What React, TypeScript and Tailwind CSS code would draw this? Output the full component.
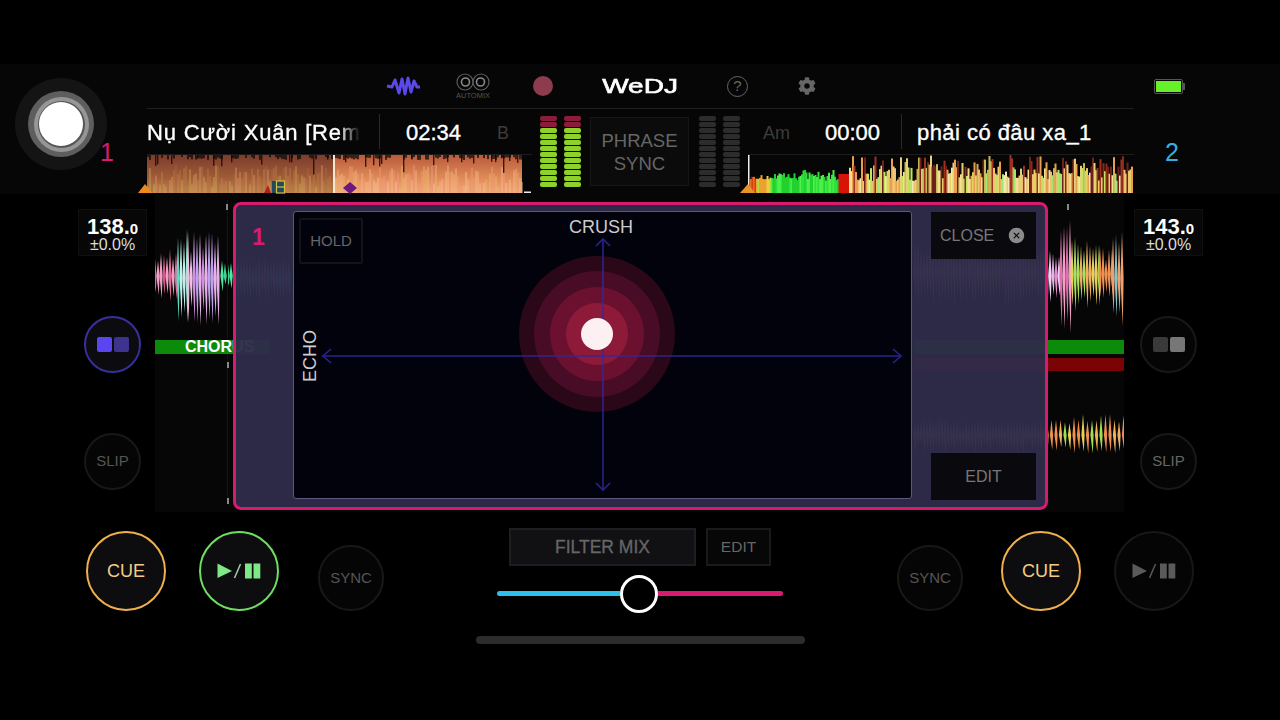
import React from "react";
import { FaCog } from "react-icons/fa";
import { IoCloseCircle } from "react-icons/io5";

const F = "font-['Liberation_Sans',Arial,sans-serif]";
const TITLE = "text-[22px] leading-[26px] text-white [-webkit-text-stroke:0.35px_white]";
const NAME = "text-[22px] leading-[26px] tracking-[0.45px] text-white [-webkit-text-stroke:0.35px_white]";
const NAME_L = "text-[22px] leading-[26px] tracking-[0.8px] text-white [-webkit-text-stroke:0.35px_white]";

function rng(seed: number) {
  let s = seed;
  return () => {
    s = (s * 16807) % 2147483647;
    return (s - 1) / 2147483646;
  };
}

function pick(r: () => number, list: string[]) {
  return list[Math.floor(r() * list.length) % list.length];
}

function LeftOverview() {
  const r = rng(77);
  const out: React.ReactNode[] = [];
  for (let x = 0; x < 375; x += 2) {
    const played = x < 186;
    const h = 6 + r() * 22;
    const c = played
      ? pick(r, ["#d89060", "#c08048", "#b87840", "#c8a050", "#a86840"])
      : pick(r, ["#f8b888", "#f0a070", "#f09880", "#e8b868", "#f8c090"]);
    out.push(<rect key={"a" + x} x={x} y={38 - h} width={2} height={h} fill={c} opacity={0.45} />);
    if (r() < 0.16) {
      const d = 3 + r() * (r() < 0.25 ? 18 : 9);
      out.push(<rect key={"b" + x} x={x} y={0} width={1.4} height={d} fill="#1a0c08" opacity={0.85} />);
    }
    if (r() < 0.5) {
      out.push(<rect key={"c" + x} x={x} y={0} width={2} height={2 + r() * 3} fill="#0a0504" opacity={0.7} />);
    }
  }
  return (
    <svg width={375} height={39} className="block overflow-visible">
      <defs>
        <linearGradient id="lp" x1="0" y1="0" x2="0" y2="1">
          <stop offset="0" stopColor="#7c3c2c" />
          <stop offset="0.6" stopColor="#a05c38" />
          <stop offset="1" stopColor="#c08850" />
        </linearGradient>
        <linearGradient id="lu" x1="0" y1="0" x2="0" y2="1">
          <stop offset="0" stopColor="#b85a3c" />
          <stop offset="0.6" stopColor="#e08a58" />
          <stop offset="1" stopColor="#f0a878" />
        </linearGradient>
      </defs>
      <rect x={0} y={0} width={186} height={38} fill="url(#lp)" />
      <rect x={186} y={0} width={189} height={38} fill="url(#lu)" />
      {out}
    </svg>
  );
}

function RightOverview() {
  const r = rng(1234);
  const out: React.ReactNode[] = [];
  for (let x = 2; x < 384; x += 1.5) {
    let h: number;
    let c: string;
    if (x < 8) {
      h = 14 + r() * 5;
      c = pick(r, ["#e07020", "#d84010"]);
    } else if (x < 22) {
      h = 13 + r() * 5;
      c = pick(r, ["#e8d040", "#f0a030", "#a8e040"]);
    } else if (x < 90) {
      h = 12 + r() * (x > 50 ? 12 : 8);
      c = pick(r, ["#2fe03a", "#44ee44", "#22d030", "#50f050"]);
    } else if (x < 100) {
      h = 19;
      c = "#d81408";
    } else {
      const tall = r() < 0.4;
      h = tall ? 24 + r() * 14 : 12 + r() * 14;
      c = pick(
        r,
        tall
          ? ["#8a2a18", "#c8b858", "#e8a050", "#70201a", "#e8d078", "#a03020"]
          : ["#e8d060", "#f0e090", "#c8e060", "#e8a050", "#f0c070", "#a0e870", "#f0e8b0"]
      );
    }
    out.push(<rect key={x} x={x} y={38 - h} width={2} height={h} fill={c} />);
  }
  return (
    <svg width={386} height={39} className="block overflow-visible">
      {out}
    </svg>
  );
}

type Seg = { from: number; to: number; amp: number; colors: string[]; cy: number; step?: number };

function Scroll({ segs, seed }: { segs: Seg[]; seed: number }) {
  const r = rng(seed);
  const out: React.ReactNode[] = [];
  segs.forEach((s, si) => {
    for (let x = s.from; x < s.to; x += s.step ?? 3) {
      const a = s.amp * (0.6 + r() * 0.4);
      const skew = (r() - 0.5) * 5;
      out.push(
        <polygon
          key={si + "-" + x}
          points={`${x},${s.cy - a + skew} ${x + 1.6},${s.cy} ${x + 0.8},${s.cy + a + skew} ${x - 1.6},${s.cy}`}
          fill={pick(r, s.colors)}
        />
      );
    }
  });
  return <>{out}</>;
}

function Meter({ on }: { on: boolean }) {
  const segs = Array.from({ length: 12 });
  return (
    <div className="flex w-[17px] flex-col gap-[1.5px]">
      {segs.map((_, i) => (
        <div
          key={i}
          className={
            "h-[4.5px] rounded-[2px] " +
            (on ? (i < 2 ? "bg-[#8c1c3c]" : "bg-[#8fd12c]") : "bg-[#2c2c2c]")
          }
        />
      ))}
    </div>
  );
}

function Circle({ cls, children }: { cls: string; children: React.ReactNode }) {
  return <div className={"flex shrink-0 items-center justify-center rounded-full " + cls}>{children}</div>;
}

function PlayIcon({ color, slash }: { color: string; slash: string }) {
  return (
    <svg width="44" height="16" viewBox="0 0 44 16" className="block">
      <polygon points="0.5,0.5 15,8 0.5,15" fill={color} />
      <line x1="17.5" y1="15" x2="23.5" y2="1" stroke={slash} strokeWidth="1.5" />
      <rect x="28" y="0.5" width="6.8" height="15" fill={color} />
      <rect x="36.5" y="0.5" width="6.8" height="15" fill={color} />
    </svg>
  );
}

function ModeSquares({ a, b }: { a: string; b: string }) {
  return (
    <div className="flex gap-[2px]">
      <div className={"h-[15px] w-[15px] rounded-[2px] " + a} />
      <div className={"h-[15px] w-[15px] rounded-[2px] " + b} />
    </div>
  );
}

function Bpm({ v }: { v: string }) {
  return (
    <div className="flex h-[47px] w-[69px] flex-col items-center border border-[#0f0f0f] bg-[#070707] pt-[7px] text-white">
      <div className="text-[22px] font-bold leading-[19px]">
        {v}.<span className="text-[15px]">0</span>
      </div>
      <div className="text-[16px] leading-[14px] text-[#ddd]">±0.0%</div>
    </div>
  );
}

export default function App() {
  return (
    <div className={"flex h-[720px] w-[1280px] flex-col overflow-hidden bg-black " + F}>
      <div className="h-16" />

      {/* Header */}
      <header className="flex h-[130px] bg-[#060606]">
        <div className="relative w-[147px] shrink-0">
          <div className="absolute left-[15px] top-[14px] flex h-[92px] w-[92px] items-center justify-center rounded-full bg-[#141414]">
            <div className="flex h-[66px] w-[66px] items-center justify-center rounded-full bg-[#5e5e5e]">
              <div className="flex h-[55px] w-[55px] items-center justify-center rounded-full bg-[#969696]">
                <div className="flex h-[47px] w-[47px] items-center justify-center rounded-full bg-[#555]">
                  <div className="h-[44px] w-[44px] rounded-full bg-white" />
                </div>
              </div>
            </div>
          </div>
          <div className="absolute left-[100px] top-[74px] text-[25px] leading-[28px] text-[#d81b72]">1</div>
        </div>

        <div className="flex w-[987px] shrink-0 flex-col">
          <div className="flex h-[45px] items-center border-b border-[#202020] pl-[239px]">
            <svg width="34" height="22" viewBox="0 0 34 22" className="shrink-0">
              <polyline
                points="1,11 6,12 9,5 13,18 16,4 19,19 22,3 25,17 28,6 31,12 34,12"
                fill="none"
                stroke="#5a48e8"
                strokeWidth="3"
                strokeLinejoin="round"
              />
            </svg>
            <div className="ml-[36px] flex w-[34px] shrink-0 flex-col items-center pt-[1px]">
              <svg width="34" height="18" viewBox="0 0 34 18" className="block">
                <circle cx="9" cy="9" r="8" fill="none" stroke="#5c5c5c" strokeWidth="1.2" />
                <circle cx="25" cy="9" r="8" fill="none" stroke="#5c5c5c" strokeWidth="1.2" />
                <circle cx="9.5" cy="9" r="4" fill="none" stroke="#888" strokeWidth="1.6" />
                <circle cx="24.5" cy="9" r="4" fill="none" stroke="#888" strokeWidth="1.6" />
              </svg>
              <div className="whitespace-nowrap text-[7.5px] leading-[10px] text-[#555]">AUTOMIX</div>
            </div>
            <div className="ml-[43px] h-[20px] w-[20px] shrink-0 rounded-full bg-[#8c3c4c]" />
            <div className="ml-[49px] flex w-[76px] shrink-0 justify-center text-[20px] text-white [-webkit-text-stroke:0.6px_white]">
              <span className="inline-block scale-x-[1.4]">WeDJ</span>
            </div>
            <div className="ml-[49px] flex h-[21px] w-[21px] shrink-0 items-center justify-center rounded-full border border-[#666] text-[15px] text-[#666]">
              ?
            </div>
            <FaCog className="ml-[50px] shrink-0 text-[18px] text-[#666]" />
          </div>

          <div className="flex h-[45px] items-start">
            <div className={"mt-[11px] w-[213px] shrink-0 whitespace-nowrap [mask-image:linear-gradient(to_right,black_90%,transparent)] " + NAME_L}>
              Nụ Cười Xuân [Rem
            </div>
            <div className="ml-[19px] mt-[5px] h-[35px] w-px shrink-0 bg-[#2a2a2a]" />
            <div className={"ml-[26px] mt-[11px] w-[55px] shrink-0 " + TITLE}>02:34</div>
            <div className="ml-[36px] mt-[14px] w-[13px] shrink-0 text-[18px] leading-[20px] text-[#3c3c3c]">B</div>
            <div className="ml-[30px] mt-[7px] flex shrink-0 gap-[7px]">
              <Meter on />
              <Meter on />
            </div>
            <div className="ml-[9px] mt-[8px] flex h-[69px] w-[99px] shrink-0 items-center justify-center border border-[#161616] bg-[#0b0b0b] text-center text-[18.5px] leading-[23px] text-[#666]">
              PHRASE
              <br />
              SYNC
            </div>
            <div className="ml-[10px] mt-[7px] flex shrink-0 gap-[7px]">
              <Meter on={false} />
              <Meter on={false} />
            </div>
            <div className="ml-[23px] mt-[14px] w-[28px] shrink-0 text-[18px] leading-[20px] text-[#3c3c3c]">Am</div>
            <div className={"ml-[34px] mt-[11px] w-[55px] shrink-0 " + TITLE}>00:00</div>
            <div className="ml-[21px] mt-[5px] h-[35px] w-px shrink-0 bg-[#2a2a2a]" />
            <div className={"ml-[15px] mt-[11px] shrink-0 whitespace-nowrap " + NAME}>phải có đâu xa_1</div>
          </div>

          <div className="relative flex h-[40px]">
            <div className="relative w-[385px] border-t border-[#1c1c1c]">
              <LeftOverview />
              <svg width="400" height="39" className="absolute -left-[9px] top-0 overflow-visible">
                <rect x="195" y="0" width="2" height="38" fill="#f5e8d0" />
                <polygon points="0,38 7,29 14,38" fill="#f08a1c" />
                <polygon points="126,38 130,30 133,38" fill="#b02020" />
                <rect x="134" y="26" width="12" height="12" fill="#1f4a60" />
                <rect x="138.5" y="26" width="8" height="12" fill="none" stroke="#d8c040" strokeWidth="1.2" />
                <line x1="138" y1="32" x2="146" y2="32" stroke="#d8c040" strokeWidth="1.2" />
                <polygon points="212,27 219,33 212,39 205,33" fill="#6c1880" />
                <rect x="386" y="36.5" width="7" height="1.5" fill="#eee" />
              </svg>
            </div>
            <div className="w-[216px] shrink-0" />
            <div className="relative w-[386px] border-t border-[#1c1c1c]">
              <RightOverview />
              <svg width="20" height="39" className="absolute -left-[8px] top-0 overflow-visible">
                <rect x="8" y="0" width="1.5" height="36" fill="#eee" />
                <polygon points="0,38 8,29 15,38" fill="#e8922a" />
              </svg>
            </div>
          </div>
        </div>

        <div className="relative flex-1">
          <div className="absolute left-[20px] top-[15px] flex items-center">
            <div className="flex h-[15px] w-[29px] items-center justify-center rounded-[2px] border border-[#555]">
              <div className="h-[11px] w-[25px] bg-[#66f02a]" />
            </div>
            <div className="h-[7px] w-[2px] bg-[#555]" />
          </div>
          <div className="absolute left-[31px] top-[74px] text-[25px] leading-[28px] text-[#38aede]">2</div>
        </div>
      </header>

      {/* Middle */}
      <main className="relative flex h-[318px]">
        <div className="w-[155px] shrink-0 pl-[78px] pt-[15px]">
          <Bpm v="138" />
          <Circle cls="ml-[6px] mt-[60px] h-[57px] w-[57px] border-2 border-[#38309a] bg-[#0c0c10]">
            <ModeSquares a="bg-[#5b45f0]" b="bg-[#3e3490]" />
          </Circle>
          <Circle cls="ml-[6px] mt-[60px] h-[57px] w-[57px] border-2 border-[#181818] bg-[#050505] text-[15px] text-[#555]">
            SLIP
          </Circle>
        </div>

        <div className="relative w-[969px] shrink-0 overflow-hidden bg-[#060606]">
          <svg width="969" height="318" className="block">
            <Scroll
              seed={11}
              segs={[
                { from: 0, to: 22, amp: 28, colors: ["#e06a9a", "#f0a0c8", "#d05a80"], cy: 82 },
                { from: 23, to: 33, amp: 58, colors: ["#60d8c0", "#90e8d8", "#c0f0e8"], cy: 84 },
                { from: 33, to: 66, amp: 46, colors: ["#d090e0", "#e8b0e8", "#c0a0f0", "#f0c0e0"], cy: 84 },
                { from: 67, to: 80, amp: 17, colors: ["#50e8a0", "#40d090"], cy: 82 },
                { from: 80, to: 135, amp: 25, colors: ["#50d8a0", "#a0a0e0"], cy: 84 },
                { from: 760, to: 892, amp: 34, colors: ["#c0a0c0", "#e090b0", "#d0c070"], cy: 78 },
                { from: 892, to: 906, amp: 32, colors: ["#e8b0e8", "#f0d0f0", "#e090c8"], cy: 82 },
                { from: 906, to: 917, amp: 57, colors: ["#e070b0", "#f0a0c8"], cy: 82 },
                { from: 917, to: 945, amp: 38, colors: ["#d0e050", "#e8d060", "#a8e060", "#f0b060"], cy: 80 },
                { from: 945, to: 958, amp: 26, colors: ["#f09050", "#e8a060"], cy: 80 },
                { from: 958, to: 969, amp: 50, colors: ["#60d8c0", "#f0a070", "#80c8c8"], cy: 84 },
                { from: 760, to: 892, amp: 18, colors: ["#c0b080", "#d09070"], cy: 241 },
                { from: 892, to: 969, amp: 20, colors: ["#e8d050", "#f09050", "#a0e050", "#f0b060"], cy: 241, step: 4.5 },
              ]}
            />
            <rect x="72" y="6" width="1" height="300" fill="#141414" />
            <rect x="71" y="10" width="2" height="6" fill="#888" />
            <rect x="72" y="168" width="2" height="6" fill="#888" />
            <rect x="72" y="304" width="2" height="6" fill="#888" />
            <rect x="912" y="10" width="2" height="6" fill="#888" />
          </svg>
          <div className="absolute left-0 top-[146px] flex h-[14px] w-[115px] items-center bg-[#0c8a0a] pl-[30px] text-[16px] font-bold text-white">
            CHORUS
          </div>
          <div className="absolute right-0 top-[146px] h-[14px] w-[210px] bg-[#0c8a0a]" />
          <div className="absolute right-0 top-[164px] h-[13px] w-[210px] bg-[#7a0404]" />
        </div>

        <div className="flex-1 pt-[15px]">
          <div className="ml-[10px]">
            <Bpm v="143" />
          </div>
          <Circle cls="ml-[16px] mt-[60px] h-[57px] w-[57px] border-2 border-[#181818] bg-[#050505]">
            <ModeSquares a="bg-[#3a3a3a]" b="bg-[#777]" />
          </Circle>
          <Circle cls="ml-[16px] mt-[60px] h-[57px] w-[57px] border-2 border-[#181818] bg-[#050505] text-[15px] text-[#666]">
            SLIP
          </Circle>
        </div>

        {/* FX panel */}
        <div className="absolute left-[233px] top-[8px] flex h-[308px] w-[815px] rounded-[8px] border-[3px] border-[#d81b6e] bg-[#2f2c4a]/[0.96]">
          <div className="w-[57px] shrink-0 pl-[16px] pt-[18px] text-[23px] font-bold leading-[28px] text-[#d81b72]">1</div>
          <div className="relative mt-[6px] h-[288px] w-[619px] shrink-0 rounded-[3px] border border-[#5c5a7c] bg-[#02020d]">
            <svg width="617" height="286" className="absolute inset-0">
              <circle cx="303" cy="122" r="78" fill="#2a0818" />
              <circle cx="303" cy="122" r="63" fill="#480c26" />
              <circle cx="303" cy="122" r="47" fill="#6c1030" />
              <circle cx="303" cy="122" r="31" fill="#8e1a3a" />
              <g stroke="#3028a0" strokeWidth="1.6" fill="none" opacity="0.85">
                <line x1="28" y1="144" x2="607" y2="144" />
                <line x1="309" y1="27" x2="309" y2="278" />
                <polyline points="37,137 29,144 37,151" />
                <polyline points="599,137 607,144 599,151" />
                <polyline points="302,34 309,27 316,34" />
                <polyline points="302,271 309,278 316,271" />
              </g>
              <circle cx="303" cy="122" r="16" fill="#fdf0f2" />
            </svg>
            <div className="absolute left-[5px] top-[6px] flex h-[46px] w-[64px] items-center justify-center rounded-[2px] border-2 border-[#13131a] text-[15px] text-[#666]">
              HOLD
            </div>
            <div className="absolute left-0 right-[3px] top-[4px] text-center text-[18px] leading-[22px] text-[#ccc]">
              CRUSH
            </div>
            <div className="absolute left-[-8px] top-[135px] w-[48px] -rotate-90 text-center text-[18px] leading-[22px] text-[#ccc]">
              ECHO
            </div>
          </div>
          <div className="ml-[19px] flex h-[295px] w-[105px] shrink-0 flex-col justify-between pt-[7px]">
            <div className="flex h-[47px] items-center bg-[#0a0a0e] pl-[9px] text-[16px] text-[#777]">
              CLOSE
              <IoCloseCircle className="ml-[13px] text-[19px] text-[#8a8a8a]" />
            </div>
            <div className="flex h-[47px] items-center justify-center bg-[#0a0a0e] text-[16px] text-[#777]">EDIT</div>
          </div>
        </div>
      </main>

      {/* Bottom */}
      <footer className="flex flex-1">
        <Circle cls="ml-[86px] mt-[19px] h-[80px] w-[80px] border-[2.5px] border-[#f0b050] bg-[#0d0d0f] text-[18px] text-[#f4cc88]">
          CUE
        </Circle>
        <Circle cls="ml-[33px] mt-[19px] h-[80px] w-[80px] border-[2.5px] border-[#6ee060] bg-[#0d0d0f]">
          <PlayIcon color="#7ee888" slash="#a0d0a0" />
        </Circle>
        <Circle cls="ml-[39px] mt-[33px] h-[66px] w-[66px] border-2 border-[#181818] bg-[#050505] text-[15px] text-[#555]">
          SYNC
        </Circle>

        <div className="ml-[92px] flex w-[329px] shrink-0 flex-col pt-[16px]">
          <div className="ml-[33px] flex h-[38px] gap-[10px]">
            <div className="flex w-[187px] items-center justify-center border-2 border-[#1e1e22] bg-[#111114] text-[17.5px] text-[#666] [-webkit-text-stroke:0.3px_#666]">
              FILTER MIX
            </div>
            <div className="flex w-[65px] items-center justify-center border-2 border-[#1a1a1a] bg-[#070707] text-[15.5px] text-[#666]">
              EDIT
            </div>
          </div>
          <div className="ml-[21px] mt-[9px] flex h-[38px] w-[286px] items-center">
            <div className="mb-[2px] h-[5px] w-[123px] rounded-l-full bg-[#2cc0ea]" />
            <div className="h-[38px] w-[38px] shrink-0 rounded-full border-[3px] border-white bg-black" />
            <div className="mb-[2px] h-[5px] flex-1 rounded-r-full bg-[#d81b70]" />
          </div>
          <div className="mt-[23px] h-[8px] rounded-full bg-[#2c2c2c]" />
        </div>

        <Circle cls="ml-[92px] mt-[33px] h-[66px] w-[66px] border-2 border-[#181818] bg-[#050505] text-[15px] text-[#555]">
          SYNC
        </Circle>
        <Circle cls="ml-[38px] mt-[19px] h-[80px] w-[80px] border-[2.5px] border-[#f0b050] bg-[#0d0d0f] text-[18px] text-[#f4cc88]">
          CUE
        </Circle>
        <Circle cls="ml-[33px] mt-[19px] h-[80px] w-[80px] border-2 border-[#181818] bg-[#050505]">
          <PlayIcon color="#5a5a5a" slash="#5a5a5a" />
        </Circle>
      </footer>
    </div>
  );
}
